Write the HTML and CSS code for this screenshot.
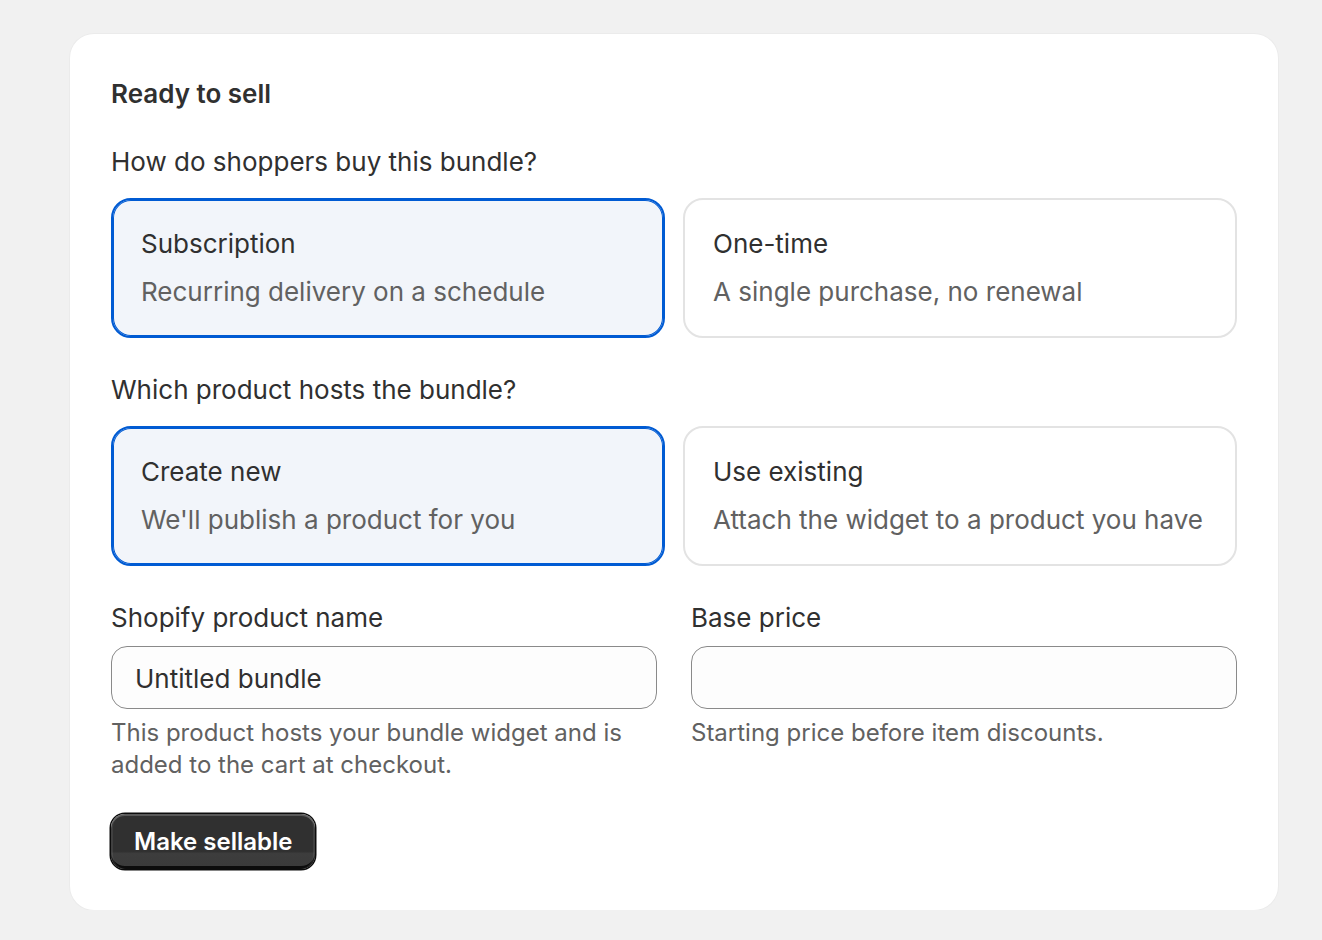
FILE: index.html
```html
<!DOCTYPE html>
<html lang="en">
<head>
<meta charset="utf-8">
<title>Ready to sell</title>
<link rel="stylesheet" href="styles.css">
</head>
<body>
<main class="page">
  <section class="card">
    <h2 class="card-title">Ready to sell</h2>

    <div class="group">
      <p class="group-label">How do shoppers buy this bundle?</p>
      <div class="choices">
        <div class="choice is-selected">
          <span class="choice-title">Subscription</span>
          <span class="choice-desc">Recurring delivery on a schedule</span>
        </div>
        <div class="choice">
          <span class="choice-title">One-time</span>
          <span class="choice-desc">A single purchase, no renewal</span>
        </div>
      </div>
    </div>

    <div class="group">
      <p class="group-label">Which product hosts the bundle?</p>
      <div class="choices">
        <div class="choice is-selected">
          <span class="choice-title">Create new</span>
          <span class="choice-desc">We'll publish a product for you</span>
        </div>
        <div class="choice">
          <span class="choice-title">Use existing</span>
          <span class="choice-desc">Attach the widget to a product you have</span>
        </div>
      </div>
    </div>

    <div class="fields">
      <div class="field">
        <label class="field-label">Shopify product name</label>
        <div class="input">Untitled bundle</div>
        <p class="help">This product hosts your bundle widget and is added to the cart at checkout.</p>
      </div>
      <div class="field">
        <label class="field-label">Base price</label>
        <div class="input"></div>
        <p class="help">Starting price before item discounts.</p>
      </div>
    </div>

    <button class="btn-primary" type="button">Make sellable</button>
  </section>
</main>
</body>
</html>
```
FILE: styles.css
```css
* { box-sizing: border-box; }

html, body {
  margin: 0;
  padding: 0;
  background: #f1f1f1;
}

body {
  font-family: Inter, "Noto Sans", "Liberation Sans", sans-serif;
  color: #303030;
  -webkit-font-smoothing: antialiased;
}

.page {
  padding: 34px 0 0 70px;
}

.card {
  width: 1208px;
  background: #ffffff;
  border-radius: 24px;
  box-shadow: 0 0 0 1px #ebebeb;
  padding: 40px 41px 41px 41px;
  display: flex;
  flex-direction: column;
  align-items: flex-start;
}

.card-title {
  margin: 0;
  font-size: 26px;
  line-height: 40px;
  font-weight: 600;
  color: #303030;
}

.group {
  width: 100%;
  margin-top: 32px;
}

.group + .group {
  margin-top: 36px;
}

.group-label {
  margin: 0 0 20px 0;
  font-size: 26px;
  line-height: 32px;
  font-weight: 400;
}

.choices {
  display: grid;
  grid-template-columns: 1fr 1fr;
  gap: 18px;
}

.choice {
  display: flex;
  flex-direction: column;
  gap: 16px;
  padding: 28px;
  border: 2px solid #e3e3e3;
  border-radius: 20px;
  background: #ffffff;
}

.choice.is-selected {
  border-color: #005bd3;
  box-shadow: inset 0 0 0 1px #005bd3;
  background: #f2f5fa;
}

.choice-title {
  font-size: 26px;
  line-height: 32px;
  color: #303030;
}

.choice-desc {
  font-size: 26px;
  line-height: 32px;
  color: #616161;
}

.fields {
  width: 100%;
  margin-top: 36px;
  display: grid;
  grid-template-columns: 1fr 1fr;
  gap: 34px;
}

.field {
  display: flex;
  flex-direction: column;
}

.field-label {
  font-size: 26px;
  line-height: 32px;
  margin-bottom: 12px;
}

.input {
  height: 63px;
  border: 1.5px solid #8a8a8a;
  border-radius: 16px;
  background: #fdfdfd;
  padding: 1px 23px 0 23px;
  display: flex;
  align-items: center;
  font-size: 26px;
  color: #303030;
}

.help {
  margin: 8px 0 0 0;
  font-size: 24px;
  line-height: 32px;
  color: #616161;
}

.btn-primary {
  margin-top: 33px;
  font-family: inherit;
  font-size: 24px;
  font-weight: 600;
  color: #ffffff;
  height: 55px;
  padding: 0 23px;
  border: none;
  border-radius: 14px;
  background: linear-gradient(180deg, #303030 0%, #303030 68%, #3d3d3d 72%, #3a3a3a 100%);
  box-shadow:
    inset 0 2px 0 rgba(255, 255, 255, 0.2),
    inset 2px 0 0 rgba(255, 255, 255, 0.08),
    inset -2px 0 0 rgba(255, 255, 255, 0.08),
    inset 0 -3px 0 #0c0c0c,
    0 0 0 1.5px #0c0c0c;
  cursor: pointer;
}
```
